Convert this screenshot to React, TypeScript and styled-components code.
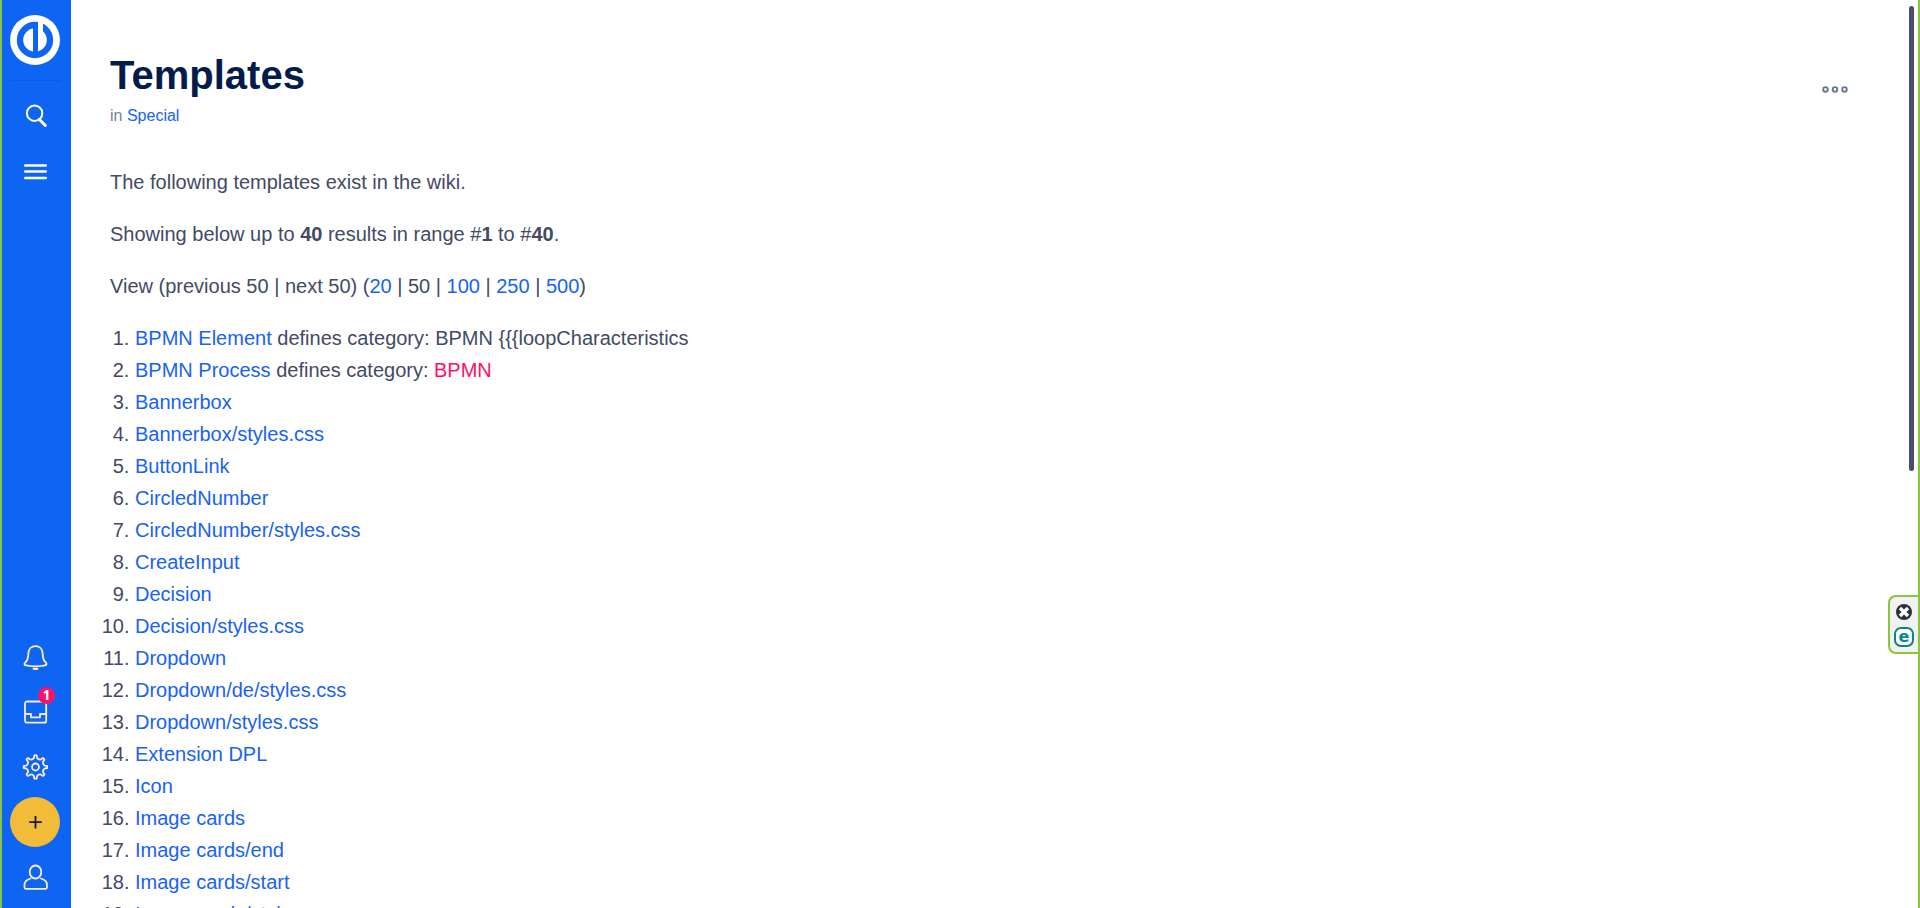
import React from 'react';
import styled, { createGlobalStyle } from 'styled-components';

const GlobalStyle = createGlobalStyle`
  *, *::before, *::after { box-sizing: border-box; }
  body {
    margin: 0;
    background: #fff;
    color: #434a64;
    font-family: "Liberation Sans", Arial, sans-serif;
    font-size: 20px;
    line-height: 32px;
  }
`;

const Page = styled.div`
  display: flex;
  height: 100vh;
  overflow: hidden;
  position: relative;
  border-left: 2px solid #8bc53f;
  border-right: 2px solid #8bc53f;
`;

const Sidebar = styled.nav`
  display: flex;
  flex-direction: column;
  justify-content: space-between;
  align-items: flex-start;
  flex: none;
  width: 69px;
  padding: 15px 11px 6px 8px;
  background: #0f65f3;
`;

const SidebarGroup = styled.div`
  display: flex;
  flex-direction: column;
  align-items: center;
  gap: 5px;
`;

const LogoLink = styled.a`
  display: block;
  height: 50px;
`;

const Divider = styled.hr`
  width: 50px;
  height: 1px;
  margin: 10px 0 5px;
  border: 0;
  background: #0c5bdc;
`;

const SidebarButton = styled.button<{ $accent?: boolean }>`
  display: flex;
  align-items: center;
  justify-content: center;
  position: relative;
  width: 50px;
  height: 50px;
  padding: 0;
  border: 0;
  border-radius: 50%;
  background: ${(p) => (p.$accent ? '#f2bc39' : 'transparent')};
  cursor: pointer;
`;

const Badge = styled.span`
  position: absolute;
  top: 0;
  right: 5px;
  width: 17px;
  height: 17px;
  border-radius: 50%;
  background: #ff1068;
  color: #fff;
  font-family: "Open Sans", "Noto Sans", sans-serif;
  font-size: 14px;
  font-weight: bold;
  line-height: 16px;
  text-align: center;
`;

const Main = styled.main`
  flex: 1;
  min-width: 0;
  padding: 51px 62px 40px 39px;
  overflow-y: auto;
  scrollbar-width: none;
`;

const Header = styled.header`
  display: flex;
  justify-content: space-between;
  align-items: center;
  margin-bottom: 38px;
`;

const Title = styled.h1`
  margin: 0 0 5px;
  color: #041c4a;
  font-size: 40px;
  line-height: 48px;
`;

const Crumb = styled.p`
  margin: 0;
  color: #7b8191;
  font-size: 16px;
  line-height: 24px;
`;

const MoreButton = styled.button`
  display: flex;
  padding: 8px;
  border: 0;
  background: none;
  cursor: pointer;
`;

const Link = styled.a<{ $missing?: boolean }>`
  color: ${(p) => (p.$missing ? '#ff0f5f' : '#1862f5')};
  text-decoration: none;
`;

const Paragraph = styled.p`
  margin: 0 0 20px;
`;

const TemplateList = styled.ol`
  margin: 0;
  padding: 0 0 0 25px;
`;

const ScrollThumb = styled.div`
  position: absolute;
  top: 6px;
  right: 4px;
  width: 5px;
  height: 51.2%;
  border-radius: 3px;
  background: #474d6b;
`;

const Widget = styled.aside`
  display: flex;
  flex-direction: column;
  align-items: center;
  gap: 7px;
  position: absolute;
  top: 595px;
  right: 0;
  width: 30px;
  padding: 7px 2px 5px 2px;
  border: 2px solid #8bc53f;
  border-right: 0;
  border-radius: 8px 0 0 8px;
  background: #f2f2f2;
`;

const WidgetButton = styled.button`
  display: flex;
  padding: 0;
  border: 0;
  background: none;
  cursor: pointer;
`;

const WidgetBadge = styled.button`
  width: 20px;
  height: 20px;
  padding: 0;
  border: 2px solid #0d8190;
  border-radius: 7px;
  background: #fff;
  color: #0d8190;
  font-family: "DejaVu Sans", sans-serif;
  font-size: 16px;
  font-weight: bold;
  line-height: 12px;
  cursor: pointer;
`;

const CREAM = '#fdebd0';

const Logo = () => (
  <svg width="50" height="50" viewBox="0 0 50 50" aria-hidden="true">
    <circle cx="25" cy="25" r="25" fill="#fff" />
    <circle cx="25" cy="25" r="15" fill="none" stroke="#0f65f3" strokeWidth="6.4" />
    <path d="M23 7h5v31h-5z" fill="#0f65f3" />
    <path d="M28 5h5v13h-5z" fill="#fff" />
  </svg>
);

const SearchIcon = () => (
  <svg width="24" height="24" viewBox="0 0 24 24" fill="none" stroke="#fff" aria-hidden="true">
    <circle cx="11.6" cy="9.2" r="7.700" strokeWidth="2" />
    <path d="M16.300 15.300l6 6.200" strokeWidth="3" strokeLinecap="round" />
  </svg>
);

const MenuIcon = () => (
  <svg width="24" height="24" viewBox="0 0 24 24" stroke="#fff" strokeWidth="2.6" strokeLinecap="round" aria-hidden="true">
    <path d="M2.300 6.500h20.400M2.300 12.500h20.400M2.300 19h20.400" />
  </svg>
);

const BellIcon = () => (
  <svg width="26" height="26" viewBox="-0.5 -0.5 26 26" fill="none" stroke={CREAM} strokeWidth="1.8" strokeLinecap="round" strokeLinejoin="round" aria-hidden="true">
    <path d="M13 1.600c-4.200 0-6.900 2.900-7.100 7-.2 5-.9 7.600-3.100 9.300-1.400 1.200-1 2.700.7 3 5.800 1.200 13.200 1.200 19 0 1.700-.3 2.100-1.800.7-3-2.200-1.700-2.900-4.300-3.100-9.300-.2-4.100-2.900-7-7.100-7z" />
    <path d="M11 24.200c1.200.8 2.800.8 4 0z" />
  </svg>
);

const InboxIcon = () => (
  <svg width="26" height="26" viewBox="0 0 26 26" fill="none" stroke={CREAM} strokeWidth="1.8" strokeLinejoin="round" aria-hidden="true">
    <rect x="3" y="2.500" width="21.200" height="21.200" rx="2" />
    <path d="M3.500 15h5.500v3.300h9v-3.300h6" />
  </svg>
);

const polar = (radius: number, degrees: number) => {
  const angle = (degrees * Math.PI) / 180;
  return `${(13 + radius * Math.cos(angle)).toFixed(2)} ${(13 + radius * Math.sin(angle)).toFixed(2)}`;
};

/* Eight rounded teeth joined by curved valleys. */
const gearPath =
  Array.from({ length: 8 }, (_, i) => {
    const a = i * 45;
    return `${i ? 'L' : 'M'}${polar(9.3, a - 9)}Q${polar(12.6, a - 7)} ${polar(11.6, a)}Q${polar(12.6, a + 7)} ${polar(9.3, a + 9)}Q${polar(7.6, a + 22.5)} ${polar(9.3, a + 36)}`;
  }).join('') + 'z';

const GearIcon = () => (
  <svg width="26" height="26" viewBox="-0.5 0 26 26" fill="none" stroke={CREAM} strokeWidth="1.8" strokeLinejoin="round" aria-hidden="true">
    <circle cx="13" cy="13" r="3.500" />
    <path d={gearPath} />
  </svg>
);

const PlusIcon = () => (
  <svg width="14" height="14" viewBox="0 0 14 14" stroke="#0e1c38" strokeWidth="1.800" aria-hidden="true">
    <path d="M7.500 1v12.500M1.200 7.200h12.600" />
  </svg>
);

const UserIcon = () => (
  <svg width="26" height="26" viewBox="-0.5 0 26 26" fill="none" stroke={CREAM} strokeWidth="1.800" strokeLinecap="round" strokeLinejoin="round" aria-hidden="true">
    <ellipse cx="13" cy="8" rx="5.800" ry="6.500" />
    <path d="M8 14.500c-3.900 1.100-6 3-6 6.500v2.300c0 .9.600 1.500 1.500 1.500h19.500c.9 0 1.500-.6 1.500-1.500V21c0-3.500-2.100-5.400-6-6.500" />
  </svg>
);

const DotsIcon = () => (
  <svg width="26" height="8" viewBox="0 0 26 8" fill="none" stroke="#667394" strokeWidth="1.800" aria-hidden="true">
    <circle cx="3.500" cy="3.500" r="2.300" />
    <circle cx="13" cy="3.500" r="2.300" />
    <circle cx="22.500" cy="3.500" r="2.300" />
  </svg>
);

const CloseIcon = () => (
  <svg width="16" height="16" viewBox="0 0 16 16" aria-hidden="true">
    <circle cx="8" cy="8" r="8" fill="#2b303b" />
    <path d="M4 4l8 8M12 4l-8 8" stroke="#fff" strokeWidth="3.400" />
  </svg>
);

interface Template {
  name: string;
  category?: string;
  missing?: boolean;
}

const templates: Template[] = [
  { name: 'BPMN Element', category: 'BPMN {{{loopCharacteristics' },
  { name: 'BPMN Process', category: 'BPMN', missing: true },
  ...[
    'Bannerbox',
    'Bannerbox/styles.css',
    'ButtonLink',
    'CircledNumber',
    'CircledNumber/styles.css',
    'CreateInput',
    'Decision',
    'Decision/styles.css',
    'Dropdown',
    'Dropdown/de/styles.css',
    'Dropdown/styles.css',
    'Extension DPL',
    'Icon',
    'Image cards',
    'Image cards/end',
    'Image cards/start',
    'Image cards/styles.css',
  ].map((name) => ({ name })),
];

export default function App() {
  return (
    <Page>
      <GlobalStyle />
      <Sidebar aria-label="Main">
        <SidebarGroup>
          <LogoLink href="#" aria-label="Home"><Logo /></LogoLink>
          <Divider />
          <SidebarButton aria-label="Search"><SearchIcon /></SidebarButton>
          <SidebarButton aria-label="Menu"><MenuIcon /></SidebarButton>
        </SidebarGroup>
        <SidebarGroup>
          <SidebarButton aria-label="Notifications"><BellIcon /></SidebarButton>
          <SidebarButton aria-label="Inbox">
            <InboxIcon />
            <Badge>1</Badge>
          </SidebarButton>
          <SidebarButton aria-label="Settings"><GearIcon /></SidebarButton>
          <SidebarButton $accent aria-label="Create"><PlusIcon /></SidebarButton>
          <SidebarButton aria-label="Account"><UserIcon /></SidebarButton>
        </SidebarGroup>
      </Sidebar>
      <Main>
        <Header>
          <div>
            <Title>Templates</Title>
            <Crumb>in <Link href="#">Special</Link></Crumb>
          </div>
          <MoreButton aria-label="More actions"><DotsIcon /></MoreButton>
        </Header>
        <Paragraph>The following templates exist in the wiki.</Paragraph>
        <Paragraph>
          Showing below up to <strong>40</strong> results in range #<strong>1</strong> to #<strong>40</strong>.
        </Paragraph>
        <Paragraph>
          View (previous 50 | next 50) (<Link href="#">20</Link> | 50 | <Link href="#">100</Link> |{' '}
          <Link href="#">250</Link> | <Link href="#">500</Link>)
        </Paragraph>
        <TemplateList>
          {templates.map(({ name, category, missing }) => (
            <li key={name}>
              <Link href="#">{name}</Link>
              {category && ' defines category: '}
              {missing ? <Link href="#" $missing>{category}</Link> : category}
            </li>
          ))}
        </TemplateList>
      </Main>
      <ScrollThumb />
      <Widget>
        <WidgetButton aria-label="Close"><CloseIcon /></WidgetButton>
        <WidgetBadge>e</WidgetBadge>
      </Widget>
    </Page>
  );
}
